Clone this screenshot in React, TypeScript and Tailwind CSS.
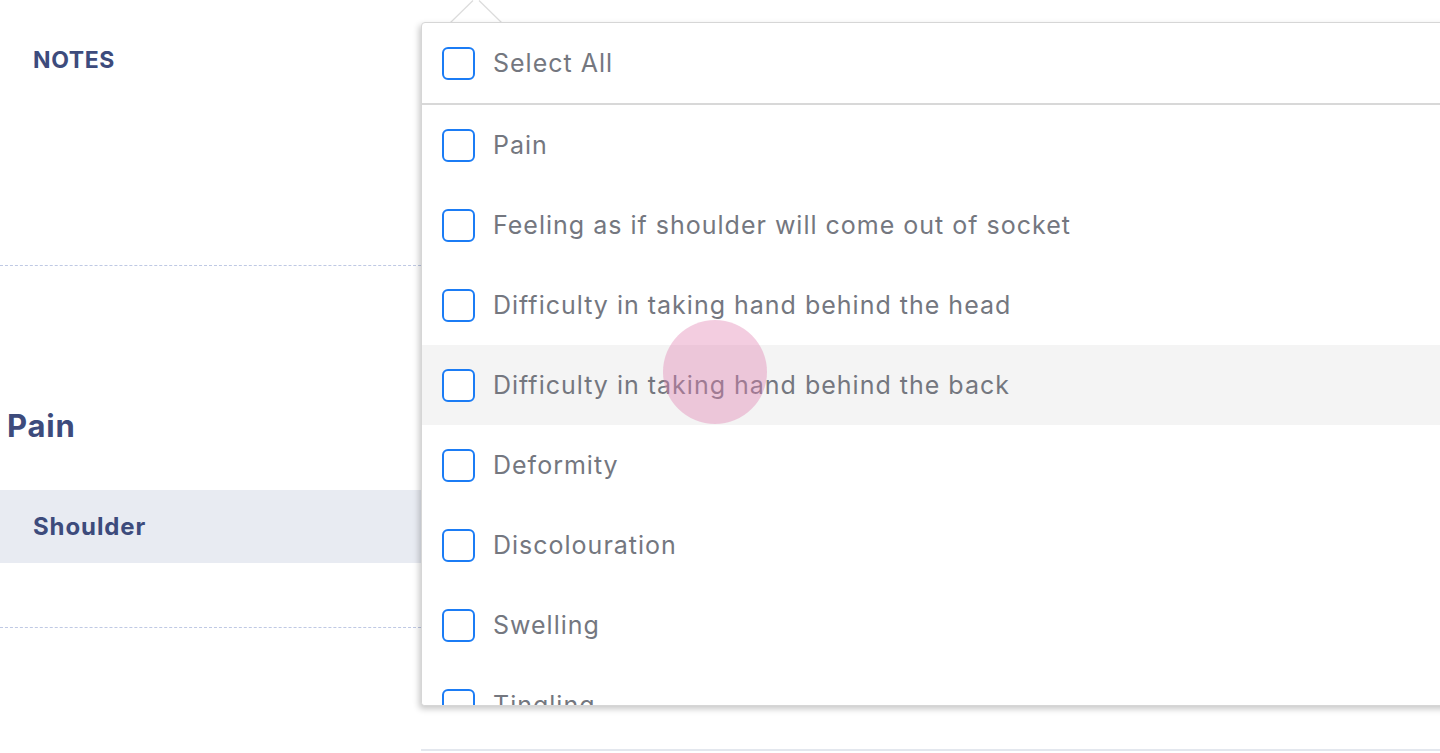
import { useState } from 'react';

const options = [
  'Pain',
  'Feeling as if shoulder will come out of socket',
  'Difficulty in taking hand behind the head',
  'Difficulty in taking hand behind the back',
  'Deformity',
  'Discolouration',
  'Swelling',
  'Tingling',
];

const Checkbox = ({ checked }: { checked: boolean }) => (
  <span
    className={`flex-shrink-0 w-[33px] h-[33px] rounded-[6px] border-2 border-[#1b7cf5] ${
      checked ? 'bg-[#1b7cf5]' : 'bg-white'
    }`}
  />
);

export default function App() {
  const [selected, setSelected] = useState<string[]>([]);
  const hovered = 'Difficulty in taking hand behind the back';

  const toggle = (name: string) =>
    setSelected((s) => (s.includes(name) ? s.filter((x) => x !== name) : [...s, name]));

  return (
    <div
      className="relative w-[1440px] h-[753px] overflow-hidden bg-white"
      style={{ fontFamily: 'Inter, "Noto Sans", sans-serif' }}
    >
      <div className="flex h-full">
        {/* Left column */}
        <div className="w-[421px] flex-shrink-0 flex flex-col">
          <div className="h-[266px] border-b border-dashed border-[#bfc9e4] pl-[33px] pt-[43px]">
            <span className="text-[23px] font-bold text-[#3d4b7c] tracking-[0.6px]">NOTES</span>
          </div>
          <div className="pt-[140px] pl-[7px]">
            <h2 className="text-[31px] leading-[40px] font-bold text-[#3d4b7c] tracking-[0.8px]">Pain</h2>
          </div>
          <div className="mt-[44px] h-[73px] bg-[#e8ebf2] flex items-center pl-[33px]">
            <span className="text-[24px] font-bold text-[#3d4b7c] tracking-[0.9px]">Shoulder</span>
          </div>
          <div className="h-[65px] border-b border-dashed border-[#bfc9e4]" />
        </div>

        {/* Right column (behind popover) */}
        <div className="flex-1 flex flex-col">
          <div className="h-[751px] border-b-2 border-[#e3e7ee]" />
        </div>
      </div>

      {/* Caret */}
      <svg className="absolute left-[449px] top-0" width="54" height="24" viewBox="0 0 54 24">
        <path d="M0 23.5 L24 0 L30 0 L54 23.5 Z" fill="#ffffff" />
        <path d="M1 23 L24 0.5 M30 0.5 L53 23" stroke="#dcdcdc" strokeWidth="1.2" fill="none" />
      </svg>

      {/* Popover */}
      <div className="absolute left-[421px] top-[22px] w-[1100px] h-[684px] bg-white rounded-[4px] border border-[#d6d6d6] shadow-[-2px_3px_6px_rgba(0,0,0,0.22)] overflow-hidden">
        <div
          className="h-[82px] flex items-center gap-[18px] pl-[20px] border-b-2 border-[#d8d8d8] cursor-pointer"
          onClick={() => setSelected(selected.length === options.length ? [] : options)}
        >
          <Checkbox checked={selected.length === options.length} />
          <span className="pt-[2px] text-[25px] tracking-[1px] text-[#74777f]">Select All</span>
        </div>
        <div className="flex flex-col">
          {options.map((o) => (
            <div
              key={o}
              onClick={() => toggle(o)}
              className={`h-[80px] flex-shrink-0 flex items-center gap-[18px] pl-[20px] cursor-pointer ${
                o === hovered ? 'bg-[#f4f4f4]' : 'bg-white'
              }`}
            >
              <Checkbox checked={selected.includes(o)} />
              <span className="pt-[2px] text-[25px] tracking-[1px] text-[#74777f]">{o}</span>
            </div>
          ))}
        </div>
      </div>

      {/* Touch indicator */}
      <div className="absolute left-[663px] top-[320px] w-[104px] h-[104px] rounded-full bg-[rgba(225,130,177,0.4)] pointer-events-none" />
    </div>
  );
}
